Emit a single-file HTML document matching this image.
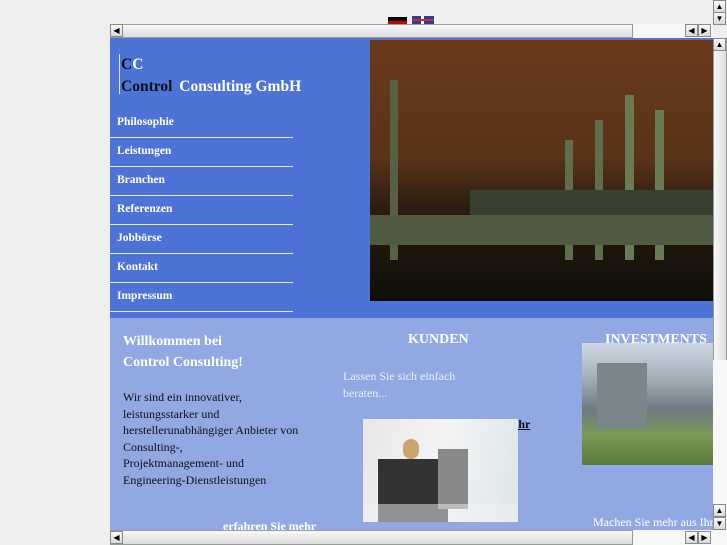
<!DOCTYPE html>
<html><head><meta charset="utf-8"><style>
*{margin:0;padding:0;box-sizing:border-box}
body{width:727px;height:545px;background:#efefef;position:relative;overflow:hidden;font-family:"Liberation Serif",serif}
.a{position:absolute}
.hs{background:linear-gradient(#f8f8f8,#dcdcdc);border:1px solid #9a9a9a}
.btn{width:13px;height:13px;background:linear-gradient(#fafafa,#d8d8d8);border:1px solid #8a8a8a;font-size:8px;line-height:11px;text-align:center;color:#000}
.nav{position:absolute;left:117px;color:#fff;font-weight:bold;font-size:11.5px}
.sep{position:absolute;left:110px;width:183px;height:1px;background:#e8ecf8}
</style></head><body>
<div class="a btn" style="left:713px;top:0">▲</div>
<div class="a btn" style="left:713px;top:12px">▼</div>
<div class="a" style="left:388px;top:17px;width:19px;height:4px;background:#000"></div>
<div class="a" style="left:388px;top:21px;width:19px;height:3px;background:#c00"></div>
<div class="a" style="left:412px;top:16px;width:22px;height:8px;background:#2a3c9a;overflow:hidden">
 <div class="a" style="left:9px;top:0;width:3px;height:8px;background:#fff"></div>
 <div class="a" style="left:0;top:3px;width:22px;height:2px;background:#d22"></div>
</div>
<div class="a hs" style="left:110px;top:24px;width:523px;height:14px"></div>
<div class="a" style="left:633px;top:24px;width:80px;height:14px;background:#f7f7f7"></div>
<div class="a btn" style="left:110px;top:24px">◀</div>
<div class="a btn" style="left:685px;top:24px">◀</div>
<div class="a btn" style="left:698px;top:24px">▶</div>
<div class="a" style="left:110px;top:38px;width:603px;height:280px;background:#4d73d6"></div>
<div class="a" style="left:119px;top:54px;width:1px;height:40px;background:#dfe6fa"></div>
<div class="a" style="left:121px;top:56px;font-size:15.5px;font-weight:bold;color:#111">C<span style="color:#fff">C</span></div>
<div class="a" style="left:121px;top:78px;font-size:15.5px;font-weight:bold;color:#111">Control <span style="color:#fff;margin-left:3px">Consulting GmbH</span></div>
<div class="nav" style="top:116px">Philosophie</div><div class="sep" style="top:137px"></div>
<div class="nav" style="top:145px">Leistungen</div><div class="sep" style="top:166px"></div>
<div class="nav" style="top:174px">Branchen</div><div class="sep" style="top:195px"></div>
<div class="nav" style="top:203px">Referenzen</div><div class="sep" style="top:224px"></div>
<div class="nav" style="top:232px">Jobbörse</div><div class="sep" style="top:253px"></div>
<div class="nav" style="top:261px">Kontakt</div><div class="sep" style="top:282px"></div>
<div class="nav" style="top:290px">Impressum</div><div class="sep" style="top:311px"></div>
<div class="a" style="left:370px;top:40px;width:343px;height:261px;background:linear-gradient(#6a3a1c 0%,#5a3318 45%,#2a1c10 65%,#0e0e08 100%)">
 <div class="a" style="left:20px;top:40px;width:8px;height:180px;background:#556045"></div>
 <div class="a" style="left:255px;top:55px;width:9px;height:165px;background:#6a7a55"></div>
 <div class="a" style="left:285px;top:70px;width:9px;height:150px;background:#6a7a55"></div>
 <div class="a" style="left:225px;top:80px;width:8px;height:140px;background:#5e6e4a"></div>
 <div class="a" style="left:195px;top:100px;width:8px;height:120px;background:#5e6e4a"></div>
 <div class="a" style="left:100px;top:150px;width:243px;height:45px;background:#3a4030"></div>
 <div class="a" style="left:0;top:175px;width:343px;height:30px;background:#505a40"></div>
</div>
<div class="a" style="left:110px;top:318px;width:603px;height:212px;background:#91a8e3"></div>
<div class="a" style="left:123px;top:331px;color:#fff;font-weight:bold;font-size:14px;line-height:21px">Willkommen bei<br>Control Consulting!</div>
<div class="a" style="left:123px;top:389px;color:#111;font-size:12px;line-height:16.5px;width:200px">Wir sind ein innovativer,<br>leistungsstarker und<br>herstellerunabhängiger Anbieter von<br>Consulting-,<br>Projektmanagement- und<br>Engineering-Dienstleistungen</div>
<div class="a" style="left:223px;top:519px;color:#fff;font-weight:bold;font-size:12px">erfahren Sie mehr</div>
<div class="a" style="left:408px;top:332px;color:#fff;font-weight:bold;font-size:14px">KUNDEN</div>
<div class="a" style="left:343px;top:368px;color:#eef;font-size:12px;line-height:17px">Lassen Sie sich einfach<br>beraten...</div>
<div class="a" style="left:503px;top:417px;color:#111;font-weight:bold;font-size:12px;text-decoration:underline">mehr</div>
<div class="a" style="left:363px;top:419px;width:155px;height:103px;background:linear-gradient(100deg,#e8e8e8 0%,#f4f4f4 50%,#dde6ea 100%)">
 <div class="a" style="left:15px;top:40px;width:70px;height:63px;background:#333"></div>
 <div class="a" style="left:40px;top:20px;width:16px;height:20px;border-radius:8px;background:#c9a56b"></div>
 <div class="a" style="left:75px;top:30px;width:30px;height:60px;background:#888"></div>
 <div class="a" style="left:0;top:85px;width:155px;height:18px;background:#f2f2f2;opacity:.5"></div>
</div>
<div class="a" style="left:605px;top:332px;color:#fff;font-weight:bold;font-size:14px;white-space:nowrap">INVESTMENTS</div>
<div class="a" style="left:582px;top:343px;width:131px;height:122px;background:linear-gradient(#cfd8e4 0%,#aab5c0 25%,#6e7a80 55%,#7a9a5a 75%,#5a7a3a 100%)">
 <div class="a" style="left:15px;top:20px;width:50px;height:65px;background:#7a858c"></div>
</div>
<div class="a" style="left:593px;top:515px;color:#fff;font-size:12px;white-space:nowrap">Machen Sie mehr aus Ihr</div>
<div class="a" style="left:713px;top:38px;width:14px;height:492px;background:linear-gradient(90deg,#f8f8f8,#dedede);border:1px solid #9a9a9a"></div>
<div class="a" style="left:713px;top:360px;width:14px;height:170px;background:#f7f7f7"></div>
<div class="a btn" style="left:713px;top:38px">▲</div>
<div class="a btn" style="left:713px;top:504px">▲</div>
<div class="a btn" style="left:713px;top:517px">▼</div>
<div class="a hs" style="left:110px;top:530px;width:523px;height:15px"></div>
<div class="a" style="left:633px;top:530px;width:94px;height:15px;background:#f7f7f7"></div>
<div class="a btn" style="left:110px;top:531px">◀</div>
<div class="a btn" style="left:685px;top:531px">◀</div>
<div class="a btn" style="left:698px;top:531px">▶</div>
</body></html>
